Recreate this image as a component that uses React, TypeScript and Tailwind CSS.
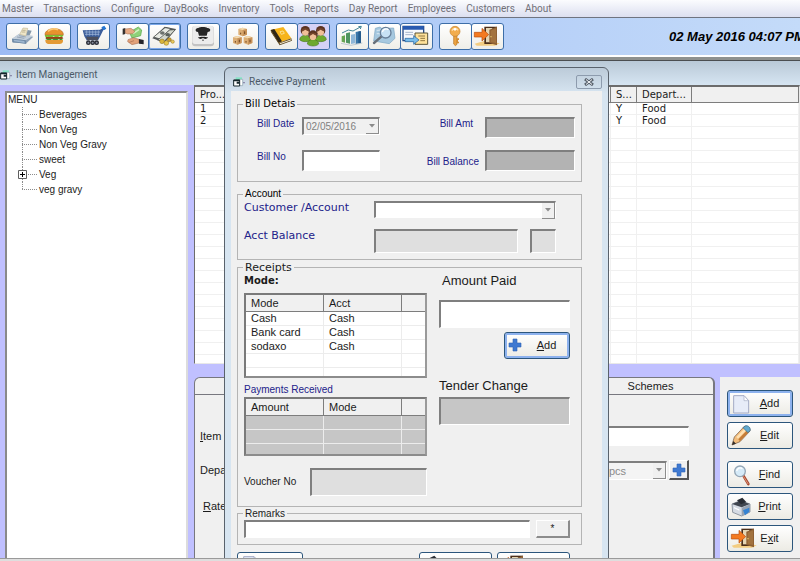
import React from 'react';

const MENU_ITEMS = [
  'Master', 'Transactions', 'Configure', 'DayBooks', 'Inventory', 'Tools',
  'Reports', 'Day Report', 'Employees', 'Customers', 'About',
];

const CATEGORIES = ['Beverages', 'Non Veg', 'Non Veg Gravy', 'sweet', 'Veg', 'veg gravy'];

const PRODUCTS = [
  { no: '1', status: 'Y', department: 'Food' },
  { no: '2', status: 'Y', department: 'Food' },
];

const MODES = [
  ['Cash', 'Cash'],
  ['Bank card', 'Cash'],
  ['sodaxo', 'Cash'],
  ['', ''],
  ['', ''],
];

const Icon: React.FC<{ children: React.ReactNode }> = ({ children }) => (
  <svg viewBox="0 0 93 75" className="block w-full h-full" aria-hidden="true">{children}</svg>
);

const RegisterIcon = () => (
  <Icon>
    <path d="M15 45 36 30 79 38 58 58 17 56Z" fill="#8fa3b8" />
    <path d="M15 44 37 29 78 35 56 49Z" fill="#c3cfdb" />
    <path d="M15 44 56 49 58 60 16 54Z" fill="#6f8aa6" />
    <path d="M20 47 52 51 53 57 21 52Z" fill="#9db6cf" />
    <path d="M38 31 48 12 62 13 57 36Z" fill="#efe6c8" stroke="#b4a883" strokeWidth="1.5" />
    <path d="M62 18 74 20 68 34 58 34Z" fill="#8497a8" />
    <path d="M46 19h10M44 24h11" stroke="#a69c78" strokeWidth="2" />
    <path d="M30 39l22 4M36 35l20 4" stroke="#7f90a3" strokeWidth="2" />
  </Icon>
);

const BurgerIcon = () => (
  <Icon>
    <path d="M18 32C18 8 73 8 73 32Z" fill="#e8922c" stroke="#b9661a" strokeWidth="2" />
    <path d="M27 22c8-8 22-9 30-5" stroke="#fbc873" strokeWidth="5" fill="none" />
    <path d="M17 33h57l-5 7-8-3-8 5-9-5-9 5-9-4-6 3Z" fill="#7dbb2f" />
    <path d="M21 39h50v6H21Z" fill="#a03c18" />
    <path d="M17 44h57l-8 5-7-3-9 5-11-5-8 4Z" fill="#3f9428" />
    <path d="M19 48h53c1 12-8 12-15 12H33c-8 0-14-1-14-12Z" fill="#e39a35" />
  </Icon>
);

const CartIcon = () => (
  <Icon>
    <path d="M14 19 66 17 78 9 84 14 76 18 66 38 60 49H26L19 37Z" fill="#3d5f9b" />
    <path d="M70 10l9-5 6 9-8 5Z" fill="#2476d2" />
    <path d="M20 24h46M21 31h43" stroke="#b6c9e6" strokeWidth="2" />
    <path d="M26 19v16M35 19v16M44 19v16M53 19v16M61 19v16" stroke="#9fb6da" strokeWidth="2" />
    <path d="M24 38h38l-3 10H28Z" fill="#4b4f5d" />
    {[31, 44, 56].map(x => (
      <circle key={x} cx={x} cy="56" r="5" fill="#858a98" stroke="#272a33" strokeWidth="4" />
    ))}
  </Icon>
);

const HandMoneyIcon = () => (
  <Icon>
    <path d="M37 25 64 9 74 18 71 35 45 42Z" fill="#8fd179" stroke="#55a749" strokeWidth="2" />
    <path d="M48 29 66 17" stroke="#d2f1c3" strokeWidth="5" />
    <path d="M17 14l8-2v18l-8 2Z" fill="#32302f" />
    <path d="M25 15 42 13 54 22 47 29 32 30 25 27Z" fill="#e6a983" stroke="#a3674a" strokeWidth="1.5" />
    <path d="M33 47 49 41 66 46 66 57 45 62 32 53Z" fill="#e2a27a" stroke="#9d6144" strokeWidth="1.5" />
    <path d="M37 55 51 50" stroke="#a66b4d" strokeWidth="2" />
    <path d="M66 45l14 3v13l-14-2Z" fill="#26272b" />
  </Icon>
);

const CashIcon = () => (
  <Icon>
    <path d="M10 43 47 8 81 15 47 56Z" fill="#55595a" />
    <path d="M14 39 48 11 66 14 33 45Z" fill="#e9ebe4" stroke="#454a48" strokeWidth="2" />
    <path d="M26 48 62 18 79 17 46 52Z" fill="#d3d7cd" stroke="#3b403e" strokeWidth="2" />
    <ellipse cx="40" cy="27" rx="7" ry="5" fill="#6c716d" />
    <ellipse cx="56" cy="32" rx="7" ry="5" fill="#59605c" />
    <circle cx="39" cy="52" r="7" fill="#d8b33b" stroke="#8b6f1d" strokeWidth="1.5" />
    <circle cx="52" cy="57" r="7" fill="#e9c649" stroke="#8b6f1d" strokeWidth="1.5" />
    <circle cx="61" cy="47" r="6" fill="#c99e2e" stroke="#806218" strokeWidth="1.5" />
    <circle cx="71" cy="53" r="5" fill="#e9ca5c" stroke="#8b6f1d" strokeWidth="1.5" />
  </Icon>
);

const ChefIcon = () => (
  <Icon>
    <rect x="12" y="6" width="66" height="61" rx="9" fill="#c3c3c3" />
    <rect x="13" y="5" width="64" height="55" rx="8" fill="#ececec" />
    <path d="M30 24c-10 0-9-13 1-12 5-4 22-4 27 0 11-1 12 12 1 12l-3 11H33Z" fill="#262626" />
    <path d="M45 39c-5-3-10 3-15 0 3 8 12 6 15 3 3 3 12 5 15-3-5 3-10-3-15 0Z" fill="#1f1f1f" />
    <path d="M42 47h6l-3 5Z" fill="#262626" />
  </Icon>
);

const BoxesIcon = () => (
  <Icon>
    {[[34, 11], [18, 36], [50, 36]].map(([x, y]) => (
      <g key={`${x}-${y}`}>
        <path d={`M${x} ${y + 4}l13-4 13 4v17l-13 5-13-5Z`} fill="#dcae74" />
        <path d={`M${x} ${y + 4}l13 3 13-3-13-4Z`} fill="#f4dbb0" />
        <path d={`M${x + 13} ${y + 7}l13-3v17l-13 5Z`} fill="#c8935a" />
        <path d={`M${x + 7} ${y + 15}v5M${x + 19} ${y + 11}v8`} stroke="#70451f" strokeWidth="3" />
      </g>
    ))}
  </Icon>
);

const BookIcon = () => (
  <Icon>
    <path d="M14 18 52 9 76 43 38 57Z" fill="#f6b41c" />
    <path d="M14 18 25 15 48 52 38 57Z" fill="#2f2617" />
    <path d="M38 57 76 43 78 50 41 64 15 24 14 18 38 55Z" fill="#5a4521" />
    <path d="M41 58 76 46v3L42 61Z" fill="#f4ead0" />
    <path d="M42 23l9-2 4 7-9 3Z" fill="none" stroke="#fbe08e" strokeWidth="3" />
  </Icon>
);

const UsersIcon = () => (
  <svg viewBox="0 0 93 75" className="block w-full h-full bg-[#d5d2f7]" aria-hidden="true">
    {[[22, 20], [68, 20], [45, 33]].map(([x, y]) => (
      <g key={x}>
        <path d={`M${x - 17} ${y + 27}c0-18 34-18 34 0-7 8-27 8-34 0Z`} fill="#6ea92f" stroke="#426d1d" strokeWidth="1.5" />
        <circle cx={x} cy={y} r="14" fill="#5a3220" />
        <ellipse cx={x} cy={y + 5} rx="10" ry="10" fill="#f0bf98" />
        <path d={`M${x - 12} ${y + 2}c2-13 22-13 24 0-8-1-10-5-12-5s-4 5-12 5Z`} fill="#74452c" />
      </g>
    ))}
  </svg>
);

const ChartIcon = () => (
  <Icon>
    <path d="M14 37 24 34v22l-10-3Z" fill="#66a553" />
    <path d="M27 28 39 25v34l-12-3Z" fill="#4f9561" />
    <path d="M42 32 54 30v28l-12 2Z" fill="#8fb6d8" />
    <path d="M56 24 70 21v36l-14 3Z" fill="#3a76a9" />
    <path d="M64 23l8-2v36l-8 1Z" fill="#245a8c" />
    <path d="M15 27 34 18 48 21 72 8M64 8l9-1-3 8" fill="none" stroke="#438597" strokeWidth="3" />
    <path d="M12 58 42 64 76 57" fill="none" stroke="#a5b4c2" strokeWidth="2" />
  </Icon>
);

const SearchDocIcon = () => (
  <Icon>
    <path d="M19 13 33 9 38 13 74 12 78 43 61 59 14 51Z" fill="#a6c8df" stroke="#7da7c4" strokeWidth="2" />
    <path d="M23 20 45 16M23 29h12" stroke="#cfe2ee" strokeWidth="4" />
    <path d="M37 38 15 57" stroke="#68717b" strokeWidth="7" strokeLinecap="round" />
    <circle cx="50" cy="26" r="16" fill="#c7e1f4" stroke="#687f99" strokeWidth="4" />
    <path d="M40 24c2-8 12-12 18-7" stroke="#fff" strokeWidth="4" fill="none" />
  </Icon>
);

const TransferIcon = () => (
  <Icon>
    <path d="M6 7h62v43H6Z" fill="#f7f9fc" stroke="#254883" strokeWidth="4" />
    <path d="M6 6h62v11H6Z" fill="#285ab0" />
    <path d="M13 25h23M13 32h23" stroke="#a7b5cb" strokeWidth="3" />
    <path d="M42 27h38v34H42Z" fill="#ffe29a" stroke="#5b5539" strokeWidth="3" />
    <path d="M52 36h20M58 43h14M58 50h14" stroke="#92773f" strokeWidth="3" />
    <path d="M12 43h26v-8l16 13-16 13v-8H12Z" fill="#79bdea" stroke="#1f5d9b" strokeWidth="2" />
  </Icon>
);

const KeyIcon = () => (
  <Icon>
    <path d="M41 30h10v31l-5 4-5-5Z" fill="#eba341" stroke="#b57627" strokeWidth="2" />
    <path d="M50 43h7v5h-3v5h3v5h-7Z" fill="#d28c31" />
    <circle cx="45" cy="22" r="15" fill="#f2ad4d" stroke="#c48330" strokeWidth="2" />
    <path d="M36 20c3-8 14-9 18-1" fill="none" stroke="#fbdca6" strokeWidth="4" />
    <circle cx="45" cy="16" r="4" fill="#fff" />
  </Icon>
);

const ExitIcon = () => (
  <Icon>
    <path d="M8 59 39 50 83 58 69 65H14Z" fill="#f3cd82" />
    <path d="M37 8h38v52H37Z" fill="#4b2f1b" />
    <path d="M42 12h19v43H42Z" fill="#e5d6b4" />
    <path d="M52 17 75 8v56l-23-7Z" fill="#8f6134" />
    <path d="M56 20 72 13v44l-16-3Z" fill="#a2733f" />
    <circle cx="57" cy="38" r="2" fill="#f5dc76" />
    <path d="M7 25h23V13l20 19-20 19V39H7Z" fill="#f47a20" stroke="#b64b0c" strokeWidth="2" />
  </Icon>
);

const PageIcon = () => (
  <svg viewBox="0 0 60 66" className="w-5 h-[22px]" aria-hidden="true">
    <path d="M8 8h31l14 15v37H8Z" fill="#e7ecf8" stroke="#a3aac4" strokeWidth="3" />
    <path d="M39 8v15h14Z" fill="#fff" stroke="#a3aac4" strokeWidth="2" />
  </svg>
);

const PencilIcon = () => (
  <svg viewBox="0 0 60 66" className="w-5 h-[22px]" aria-hidden="true">
    <path d="M3 60 10 36 40 4c8-4 19 5 17 14L27 50Z" fill="#f2bd7c" stroke="#6a5240" strokeWidth="2" />
    <path d="M16 36 42 9l6 5L21 41Z" fill="#fde1b3" />
    <path d="M27 49 54 21l-5-6L22 43Z" fill="#c47c38" />
    <path d="M36 8 43 3c9-3 17 6 14 14l-6 6Z" fill="#62a9cf" stroke="#376b88" strokeWidth="2" />
    <path d="M3 60l4-12 8 8Z" fill="#33302d" />
  </svg>
);

const FindIcon = () => (
  <svg viewBox="0 0 60 66" className="w-5 h-[22px]" aria-hidden="true">
    <path d="M37 35 52 60" stroke="#a8492f" strokeWidth="8" strokeLinecap="round" />
    <path d="M38 38 51 59" stroke="#e0977c" strokeWidth="3" strokeLinecap="round" />
    <circle cx="27" cy="22" r="16" fill="#d6ebf8" stroke="#94a6b5" strokeWidth="4" />
    <path d="M17 21c2-9 11-12 17-7" fill="none" stroke="#fff" strokeWidth="4" />
  </svg>
);

const PrintIcon = () => (
  <svg viewBox="0 0 60 66" className="w-5 h-[22px]" aria-hidden="true">
    <path d="M3 24 28 14 57 24v24L32 60 5 49Z" fill="#d5dbe3" stroke="#65707e" strokeWidth="2" />
    <path d="M3 24 28 14 57 24 32 34Z" fill="#40464f" />
    <path d="M18 13 34 5 46 18 30 25Z" fill="#292d34" />
    <path d="M32 35 57 25v23L32 60Z" fill="#97a3b2" />
    <path d="M36 43 55 35v12L42 58Z" fill="#3483d3" />
    <path d="M9 33l16 7v4L9 37Z" fill="#fff" />
  </svg>
);

const PlusIcon: React.FC<{ className: string }> = ({ className }) => (
  <svg viewBox="0 0 14 14" className={className} aria-hidden="true">
    <path d="M5 1h4v4h4v4H9v4H5V9H1V5h4Z" fill="#3f79d1" stroke="#2b62b5" strokeWidth=".6" />
  </svg>
);

const FormIcon = () => (
  <svg viewBox="0 0 36 30" className="w-3 h-[10px] shrink-0" aria-hidden="true">
    <path d="M8 1h19v12H8Z" fill="#84e4c5" />
    <path d="M19 7h10v19H19Z" fill="#fff" stroke="#8aa0ac" strokeWidth="2" />
    <path d="M2 9h18v18H2Z" fill="#fff" stroke="#15262b" strokeWidth="3" />
    <path d="M2 8h18v5H2ZM11 14h9v6h-9Z" fill="#15262b" />
    <circle cx="33" cy="17" r="2" fill="#547" />
  </svg>
);

const TOOL_GROUPS = [
  [{ name: 'Billing', icon: RegisterIcon }, { name: 'Items', icon: BurgerIcon }],
  [{ name: 'Purchase', icon: CartIcon }],
  [{ name: 'Payment', icon: HandMoneyIcon }, { name: 'Receipt', icon: CashIcon }],
  [{ name: 'Kitchen', icon: ChefIcon }],
  [{ name: 'Stock', icon: BoxesIcon }],
  [{ name: 'Ledger', icon: BookIcon }, { name: 'Customers', icon: UsersIcon }],
  [{ name: 'Charts', icon: ChartIcon }, { name: 'Search', icon: SearchDocIcon }, { name: 'Transfer', icon: TransferIcon }],
  [{ name: 'Login', icon: KeyIcon }, { name: 'Exit', icon: ExitIcon }],
];

const TitleText: React.FC<{ children: string }> = ({ children }) => (
  <span className="flex items-center gap-1 font-[Roboto,'Open_Sans',sans-serif] text-[10px] leading-[14px] text-[#4c5a68]">
    <FormIcon />
    {children}
  </span>
);

const ActionButton: React.FC<{
  before?: string; accessKey: string; after: string; focused?: boolean; icon: React.ReactNode;
}> = ({ before = '', accessKey, after, focused, icon }) => (
  <button
    type="button"
    className={`flex items-center w-[66px] h-[27px] pl-[3px] rounded-[3px] border border-[#2c567c] bg-linear-to-b from-white to-[#ecebe4] text-[11px] ${focused ? 'ring-2 ring-inset ring-[#8db2ee]' : ''}`}
  >
    <span className="w-6 h-[22px] flex items-center justify-start">{icon}</span>
    <span className="flex-1 pr-2 text-center">{before}<u>{accessKey}</u>{after}</span>
  </button>
);

const Arrow = () => (
  <span className="pointer-events-none absolute right-px top-[2px] bottom-px w-[13px] flex items-center justify-center bg-[#f0f0f0] border-r border-b border-[#8d8d8d]">
    <svg viewBox="0 0 6 4" className="w-[6px] h-1" aria-hidden="true"><path d="M0 0h6L3 3.500Z" fill="#8b8b8b" /></svg>
  </span>
);

const SUNKEN = 'border-t-2 border-l-2 border-r border-b border-t-[#7f7f7f] border-l-[#7f7f7f] border-r-white border-b-white outline-none';

const ProductGrid = () => (
  <div className="flex-1 min-h-0 overflow-hidden bg-white border border-t-2 border-[#6c6c6c] border-b-[#e8e8e8] border-r-[#e8e8e8]">
    <table className="w-full table-fixed border-separate border-spacing-0 font-['DejaVu_Sans',sans-serif] text-[10px]">
      <colgroup>
        <col className="w-[38px]" />
        <col className="w-[378px]" />
        <col className="w-[26px]" />
        <col className="w-[55px]" />
        <col />
      </colgroup>
      <thead>
        <tr>
          {['Pro...', '', 'S...', 'Depart...', ''].map((h, i) => (
            <th key={i} className="h-4 p-0 pl-[5px] text-left font-normal leading-[15px] whitespace-nowrap bg-[#f0f0f0] border-r border-b border-[#7d7d7d]">{h}</th>
          ))}
        </tr>
      </thead>
      <tbody>
        {Array.from({ length: 22 }, (_, i) => {
          const p = PRODUCTS[i];
          return (
            <tr key={i}>
              {[p?.no, '', p?.status, p?.department, ''].map((cell, c) => (
                <td key={c} className="h-3 p-0 pl-[5px] leading-[11px] border-r border-b border-[#f0f0f0]">{cell}</td>
              ))}
            </tr>
          );
        })}
      </tbody>
    </table>
  </div>
);

const CategoryTree = () => (
  <ul className="w-[183px] shrink-0 mt-[6px] bg-white border-2 border-b-0 border-[#8a8a8a] border-r-[#dcdcdc] text-[10px] leading-[14px]">
    <li className="pl-px">
      MENU
      <ul className="pl-[14px]">
        {CATEGORIES.map((name, i) => (
          <li key={name} className="flex items-center h-[15px]">
            <svg viewBox="0 0 17 15" className="w-[17px] h-[15px] shrink-0" aria-hidden="true">
              <path d={i === CATEGORIES.length - 1 ? 'M.5 0v8' : 'M.5 0v15'} stroke="#8c8c8c" strokeDasharray="1 1" />
              <path d="M0 7.500h15" stroke="#8c8c8c" strokeDasharray="1 1" />
            </svg>
            {name === 'Veg' && (
              <svg viewBox="0 0 9 9" className="w-[9px] h-[9px] shrink-0 -ml-[21px] mr-3" aria-hidden="true">
                <path d="M.5.500h8v8h-8Z" fill="#fff" stroke="#5f5f5f" />
                <path d="M2 4.500h5M4.500 2v5" stroke="#000" />
              </svg>
            )}
            {name}
          </li>
        ))}
      </ul>
    </li>
  </ul>
);

const ItemForm = () => (
  <section className="flex-1 flex flex-col rounded-t-md bg-[#f0f0f0] border border-b-0 border-r-2 border-[#77777f]">
    <div className="flex justify-end border-b border-[#77777f]">
      <button type="button" className="w-[125px] h-4 text-[11px] leading-4">Schemes</button>
    </div>
    <div className="flex flex-col gap-[14px] pt-[31px] pl-[5px] pr-6 text-[11px]">
      <div className="flex items-center justify-between">
        <label htmlFor="item-code"><u>I</u>tem Code</label>
        <input id="item-code" className={`w-[120px] h-5 bg-white ${SUNKEN}`} />
      </div>
      <div className="flex items-center justify-between">
        <label htmlFor="unit">Department</label>
        <div className="flex items-center gap-[2px]">
          <div className="relative">
            <select id="unit" disabled className={`appearance-none w-[64px] h-[19px] pl-1 bg-[#f4f4f4] text-[#8a8a8a] opacity-100 ${SUNKEN}`}>
              <option>pcs</option>
            </select>
            <Arrow />
          </div>
          <button type="button" aria-label="Add unit" className="flex items-center justify-center w-5 h-5 bg-[#f0f0f0] border border-r-2 border-b-2 border-white border-r-[#555] border-b-[#555]">
            <PlusIcon className="w-[14px] h-[14px]" />
          </button>
        </div>
      </div>
      <p className="pl-[3px] pt-1"><u>R</u>ate</p>
    </div>
  </section>
);

const ItemActions = () => (
  <div className="flex flex-col gap-[5px] w-[80px] pt-[13px] pl-[7px] bg-[#f0f0f0]">
    <ActionButton accessKey="A" after="dd" focused icon={<PageIcon />} />
    <ActionButton accessKey="E" after="dit" icon={<PencilIcon />} />
    <span className="h-[2px]" />
    <ActionButton accessKey="F" after="ind" icon={<FindIcon />} />
    <ActionButton accessKey="P" after="rint" icon={<PrintIcon />} />
    <ActionButton before="E" accessKey="x" after="it" icon={<span className="w-[31px] h-[25px] shrink-0 -ml-[2px]"><ExitIcon /></span>} />
  </div>
);

const ListTable: React.FC<{ head: string[]; rows: string[][]; grey?: boolean }> = ({ head, rows, grey }) => (
  <div className={`overflow-hidden border-2 border-[#7a7a7a] border-r-[#9a9a9a] border-b-[#8c8c8c] ${grey ? 'bg-[#c6c6c6] h-[59px]' : 'bg-white h-[85px]'}`}>
    <table className="w-full table-fixed border-separate border-spacing-0 text-[11px]">
      <colgroup>
        <col className="w-[78px]" />
        <col className="w-[78px]" />
        <col />
      </colgroup>
      <thead>
        <tr>
          {[...head, ''].map((h, i) => (
            <th key={i} className="h-[17px] p-0 pl-[5px] text-left font-normal leading-4 bg-[#f0f0f0] border-r border-b border-[#7d7d7d] last:border-r-0">{h}</th>
          ))}
        </tr>
      </thead>
      <tbody>
        {rows.map((row, i) => (
          <tr key={i}>
            {[...row, ''].map((cell, c) => (
              <td key={c} className="h-[14px] p-0 pl-[5px] leading-[13px] border-r border-b border-[#ececec] last:border-r-0">{cell}</td>
            ))}
          </tr>
        ))}
      </tbody>
    </table>
  </div>
);

const ReceivePayment = () => (
  <div
    role="dialog"
    aria-label="Receive Payment"
    className="absolute left-[224px] top-[6px] w-[385px] px-[6px] rounded-t-md border border-[#59626c] bg-linear-to-b from-[#bccbd9] to-[#d7e5f1] to-5%"
  >
    <div className="flex items-center justify-between h-[23px] pl-[2px] pt-1">
      <TitleText>Receive Payment</TitleText>
      <button type="button" aria-label="Close" className="flex items-center justify-center w-[26px] h-[14px] rounded-xs border border-[#8d9bad]">
        <svg viewBox="0 0 10 8" className="w-[10px] h-2" aria-hidden="true">
          <path d="M1 1l8 6M9 1 1 7" stroke="#59626d" strokeWidth="3" />
          <path d="M2 1.500l6 5M8 1.500l-6 5" stroke="#f5f8fb" strokeWidth="1" />
        </svg>
      </button>
    </div>

    <form className="flex flex-col pt-[6px] px-[6px] pr-[20px] bg-[#f0f0f0] text-[10px]" onSubmit={e => e.preventDefault()}>
      <fieldset className="min-w-0 border border-[#b4b4b4] pl-[19px] pt-[6px] pb-[10px] text-[#22228a]">
        <legend className="-ml-[14px] px-[2px] font-['DejaVu_Sans',sans-serif] leading-[14px] text-black">Bill Detais</legend>
        <div className="grid grid-cols-[45px_78px_105px_90px] gap-y-3 items-start">
          <label htmlFor="bill-date" className="leading-[14px]">Bill Date</label>
          <div className="relative">
            <select id="bill-date" disabled className={`appearance-none w-full h-[18px] pl-[2px] bg-[#f0f0f0] text-[#808080] opacity-100 ${SUNKEN}`}>
              <option>02/05/2016</option>
            </select>
            <Arrow />
          </div>
          <label htmlFor="bill-amt" className="pr-3 text-right leading-[14px]">Bill Amt</label>
          <input id="bill-amt" readOnly className={`w-full h-[21px] bg-[#b3b3b3] ${SUNKEN}`} />

          <label htmlFor="bill-no" className="leading-[14px]">Bill No</label>
          <input id="bill-no" className={`w-full h-[21px] bg-white ${SUNKEN}`} />
          <label htmlFor="bill-balance" className="pr-[6px] pt-[5px] text-right leading-[14px]">Bill Balance</label>
          <input id="bill-balance" readOnly className={`w-full h-[21px] bg-[#b3b3b3] ${SUNKEN}`} />
        </div>
      </fieldset>

      <fieldset className="min-w-0 mt-[6px] border border-[#b4b4b4] pl-[6px] pt-px pb-[6px] font-['DejaVu_Sans',sans-serif] text-[11px] text-[#22228a]">
        <legend className="-ml-px px-[2px] font-['Liberation_Sans',sans-serif] text-[10px] leading-3 text-black">Account</legend>
        <div className="grid grid-cols-[130px_182px] gap-y-[9px] items-start">
          <label htmlFor="customer" className="leading-[14px]">Customer /Account</label>
          <div className="relative">
            <select id="customer" className={`appearance-none w-full h-[17px] bg-white ${SUNKEN}`}>
              <option></option>
            </select>
            <Arrow />
          </div>
          <label htmlFor="acct-balance" className="leading-[14px]">Acct Balance</label>
          <div className="flex justify-between">
            <input id="acct-balance" readOnly className={`w-[144px] h-6 bg-[#dfdfdf] ${SUNKEN}`} />
            <input aria-label="Balance type" readOnly className={`w-[26px] h-6 bg-[#dfdfdf] ${SUNKEN}`} />
          </div>
        </div>
      </fieldset>

      <fieldset className="min-w-0 mt-px border border-[#b4b4b4] pl-[6px] pr-[11px] pb-[10px]">
        <legend className="-ml-px px-[2px] font-['DejaVu_Sans',sans-serif] text-[11px] leading-[13px]">Receipts</legend>
        <div className="flex justify-between">
          <div className="w-[183px]">
            <p className="mb-[5px] font-['DejaVu_Sans',sans-serif] font-bold leading-[14px]">Mode:</p>
            <ListTable head={['Mode', 'Acct']} rows={MODES} />
            <p className="mt-[6px] mb-px leading-3 text-[#22228a]">Payments Received</p>
            <ListTable head={['Amount', 'Mode']} rows={[['', ''], ['', ''], ['', '']]} grey />
            <div className="flex items-center justify-between mt-3">
              <label htmlFor="voucher">Voucher No</label>
              <input id="voucher" readOnly className={`w-[117px] h-7 bg-[#dfdfdf] ${SUNKEN}`} />
            </div>
          </div>
          <div className="flex flex-col w-[131px]">
            <label htmlFor="amount-paid" className="pl-[3px] text-[13px] leading-[14px]">Amount Paid</label>
            <input id="amount-paid" className={`mt-3 w-full h-7 bg-white ${SUNKEN}`} />
            <div className="flex justify-end mt-1">
              <ActionButton accessKey="A" after="dd" focused icon={<PlusIcon className="w-[14px] h-[14px]" />} />
            </div>
            <label htmlFor="tender" className="mt-5 text-[13px] leading-[14px]">Tender Change</label>
            <input id="tender" readOnly className={`mt-1 w-full h-7 bg-[#c6c6c6] ${SUNKEN}`} />
          </div>
        </div>
      </fieldset>

      <fieldset className="min-w-0 border border-[#b4b4b4] pl-[6px] pr-[11px] pb-[6px]">
        <legend className="-ml-px px-[2px] leading-[13px]">Remarks</legend>
        <div className="flex gap-[6px]">
          <input aria-label="Remarks" className={`flex-1 min-w-0 h-[18px] bg-white ${SUNKEN}`} />
          <button type="button" className="w-[34px] h-[18px] leading-4 border border-r-2 border-b-2 border-white border-r-[#8c8c8c] border-b-[#8c8c8c]">*</button>
        </div>
      </fieldset>

      <div className="flex gap-[5px] pt-[7px] pr-3">
        <button type="button" aria-label="New" className="flex items-center w-[66px] h-[27px] pl-[3px] rounded-[3px] border border-[#2c567c] bg-linear-to-b from-white to-[#ecebe4]">
          <PageIcon />
        </button>
        <button type="button" aria-label="Print" className="ml-auto flex items-center w-[73px] h-[27px] pl-[3px] rounded-[3px] border border-[#2c567c] bg-linear-to-b from-white to-[#ecebe4]">
          <PrintIcon />
        </button>
        <button type="button" aria-label="Exit" className="flex items-center w-[73px] h-[27px] rounded-[3px] border border-[#2c567c] bg-linear-to-b from-white to-[#ecebe4]">
          <span className="w-[31px] h-[25px]"><ExitIcon /></span>
        </button>
      </div>
    </form>
  </div>
);

export default function App() {
  return (
    <div className="flex flex-col h-screen overflow-hidden bg-[#c0c0ff] font-['Liberation_Sans',Arial,sans-serif] text-[11px] text-[#1b1b1b]">
      <nav className="flex gap-[10px] h-[17px] pl-[2px] shrink-0 items-center bg-linear-to-b from-[#fbfcfe] to-[#dcdff0] font-[Roboto,'Open_Sans',sans-serif] text-[10px] text-[#707078]">
        {MENU_ITEMS.map(item => (
          <a key={item} href="#" className="whitespace-nowrap leading-4">{item}</a>
        ))}
      </nav>

      <header className="flex items-center h-10 pl-[6px] shrink-0 border-t border-b-2 border-t-[#6f7480] border-b-white bg-linear-to-r from-[#9dbbf5] to-[#c4dbf9]">
        <div className="flex gap-[6px]">
          {TOOL_GROUPS.map((group, g) => (
            <div key={g} className="flex">
              {group.map(({ name, icon: ToolIcon }, i) => (
                <button
                  key={name}
                  type="button"
                  aria-label={name}
                  className={`w-[33px] h-[27px] overflow-hidden rounded-[3px] border border-[#3d6ea8] bg-linear-to-b from-white to-[#efeee8] ${i > 0 ? '-ml-px' : ''} ${name === 'Receipt' ? 'ring-1 ring-inset ring-[#7ba7ea]' : ''}`}
                >
                  <ToolIcon />
                </button>
              ))}
            </div>
          ))}
        </div>
        <time className="ml-auto w-[131px] whitespace-nowrap text-[13px] leading-5 font-bold italic text-black">02 May 2016 04:07 PM</time>
      </header>
      <div className="h-1 shrink-0 bg-[#8e918f] border-b border-[#4b4e50]" />

      <main className="relative flex-1 min-h-0 flex flex-col overflow-hidden">
        <div className="flex items-center h-6 pt-1 shrink-0 bg-linear-to-b from-[#b9c9d7] to-[#d6e5f2]">
          <TitleText>Item Management</TitleText>
        </div>
        <div className="flex-1 min-h-0 flex gap-[6px] pl-[5px]">
          <CategoryTree />
          <div className="flex-1 min-w-0 flex flex-col gap-[13px]">
            <ProductGrid />
            <div className="flex gap-[5px] h-[181px] shrink-0">
              <ItemForm />
              <ItemActions />
            </div>
          </div>
        </div>
        <ReceivePayment />
      </main>
      <footer className="h-[3px] shrink-0 bg-[#dedede] border-t border-[#9a9a9a]" />
    </div>
  );
}
